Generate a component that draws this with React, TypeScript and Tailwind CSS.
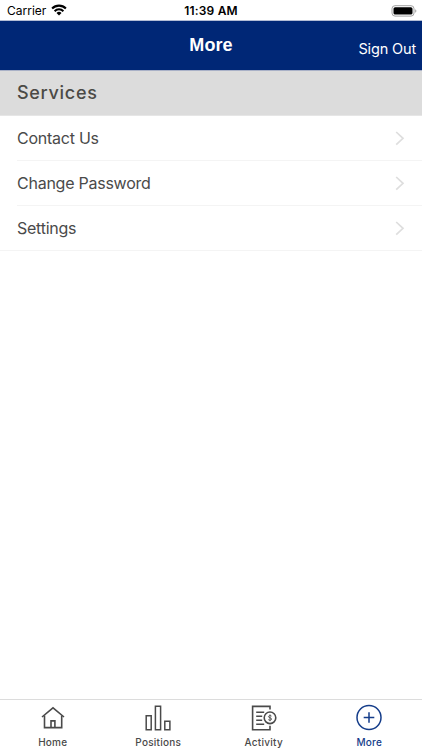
import type { ReactNode } from "react";

const services = ["Contact Us", "Change Password", "Settings"];

export default function App() {
  return (
    <div className="flex h-[750px] w-[422px] flex-col overflow-hidden bg-white font-['Inter',sans-serif] text-[#4a4a4a]">
      <StatusBar />

      <header className="grid h-[50px] shrink-0 grid-cols-3 items-center border-b border-[#a9b1c7] bg-[#002776] text-white">
        <h1 className="col-start-2 text-center font-['Liberation_Sans',sans-serif] text-[18px] leading-[49px] font-bold tracking-[0.1px]">
          More
        </h1>
        <button className="pt-[6px] pr-[6px] text-right text-[14.5px] leading-5 tracking-[-0.15px]">
          Sign Out
        </button>
      </header>

      <main className="flex-1">
        <h2 className="flex h-[45px] items-center border-b border-[#e6e6e6] bg-[#dcdcdc] pb-[2px] pl-[17px] text-[18px] font-medium tracking-[0.7px] text-[#4b4a46]">
          Services
        </h2>
        <ul className="border-b border-[#f4f4f4]">
          {services.map((name) => (
            <ServiceRow key={name} name={name} />
          ))}
        </ul>
      </main>

      <nav className="grid h-[51px] shrink-0 grid-cols-4 border-t border-[#dcdcdc]">
        <Tab label="Home">
          <HomeIcon />
        </Tab>
        <Tab label="Positions">
          <PositionsIcon />
        </Tab>
        <Tab label="Activity">
          <ActivityIcon />
        </Tab>
        <Tab label="More" active>
          <MoreIcon />
        </Tab>
      </nav>
    </div>
  );
}

function StatusBar() {
  return (
    <div className="grid h-[21px] shrink-0 grid-cols-3 items-center border-b border-[#b3bdd5] pt-px text-black">
      <div className="flex items-center gap-[5px] pl-[7px] text-[12px] leading-4">
        <span>Carrier</span>
        <svg width="16" height="12" viewBox="0 0 16 12" fill="none" stroke="currentColor" className="-mt-0.5">
          <path d="M1.1 4.5a9.8 9.8 0 0 1 13.8 0" strokeWidth="2.1" />
          <path d="M3.6 7.2a6.2 6.2 0 0 1 8.8 0" strokeWidth="2" />
          <path d="M8 11.5 5.5 9a3.5 3.5 0 0 1 5 0z" fill="currentColor" stroke="none" />
        </svg>
      </div>
      <div className="text-center text-[12px] leading-4 font-semibold tracking-[0.2px]">11:39 AM</div>
      <div className="flex justify-end pr-[5px]">
        <svg width="26" height="12" viewBox="0 0 26 12">
          <rect x="1" y="0.7" width="22" height="10.4" rx="3" fill="none" stroke="#a2a2a2" />
          <rect x="2.5" y="2.2" width="19" height="7.4" rx="1.6" fill="black" />
          <path d="M24.2 4.3c1.6.7 1.6 2.7 0 3.4z" fill="#a2a2a2" />
        </svg>
      </div>
    </div>
  );
}

function ServiceRow({ name }: { name: string }) {
  return (
    <li className="group pl-[17px]">
      <div className="flex h-[45px] items-center justify-between border-b border-[#f4f4f4] pr-[17px] group-last:h-11 group-last:border-b-0">
        <span className="text-[16px] tracking-[-0.25px]">{name}</span>
        <svg width="10" height="15" viewBox="0 0 10 15" fill="none" stroke="#dedede" strokeWidth="1.7">
          <path d="m1.2 1 6.8 6.3-6.8 6.3" />
        </svg>
      </div>
    </li>
  );
}

function Tab({ label, active = false, children }: { label: string; active?: boolean; children: ReactNode }) {
  return (
    <button className={`flex flex-col items-center pt-[4px] ${active ? "text-[#153d8a]" : "text-[#4a4a4a]"}`}>
      {children}
      <span className="mt-[5px] text-[10px] leading-3 font-medium tracking-[0.25px]">{label}</span>
    </button>
  );
}

function HomeIcon() {
  return (
    <svg width="26" height="27" viewBox="0 0 26 27" fill="none" stroke="currentColor" strokeWidth="1.6">
      <path d="M2 13 13 3.8 24 13" />
      <path d="M4.5 11.4v12.2h17.2V11.4" />
      <path d="M11 23.6v-6.7h3.9v6.7" />
    </svg>
  );
}

function PositionsIcon() {
  return (
    <svg width="26" height="27" viewBox="0 0 26 27" fill="none" stroke="currentColor" strokeWidth="1.5">
      <path d="M1.2 11.7h5v14h-5zM10.4 2.2h5.2v23.5h-5.2zM19.8 17.2h5.1v8.5h-5.1z" />
    </svg>
  );
}

function ActivityIcon() {
  return (
    <svg width="26" height="27" viewBox="0 0 26 27" fill="none" stroke="currentColor" strokeWidth="1.6">
      <path d="M19 5.6V2.4H1.6v23.4H19v-4" />
      <path d="M5.2 8.3h8M5.2 12.3h6M5.2 16.3h6M5.2 20.3h8" />
      <circle cx="19" cy="13.8" r="5.8" />
      <path d="M20.5 12.1c-.7-.8-3-.7-3 .6 0 1.4 3.1.9 3.1 2.3 0 1.4-2.3 1.6-3.3.6M19 10.4v6.8" strokeWidth="0.9" />
    </svg>
  );
}

function MoreIcon() {
  return (
    <svg width="26" height="27" viewBox="0 0 26 27" fill="none" stroke="currentColor" strokeWidth="1.5">
      <circle cx="13" cy="13.5" r="12" />
      <path d="M13 8.2v10.6M7.7 13.5h10.6" />
    </svg>
  );
}
